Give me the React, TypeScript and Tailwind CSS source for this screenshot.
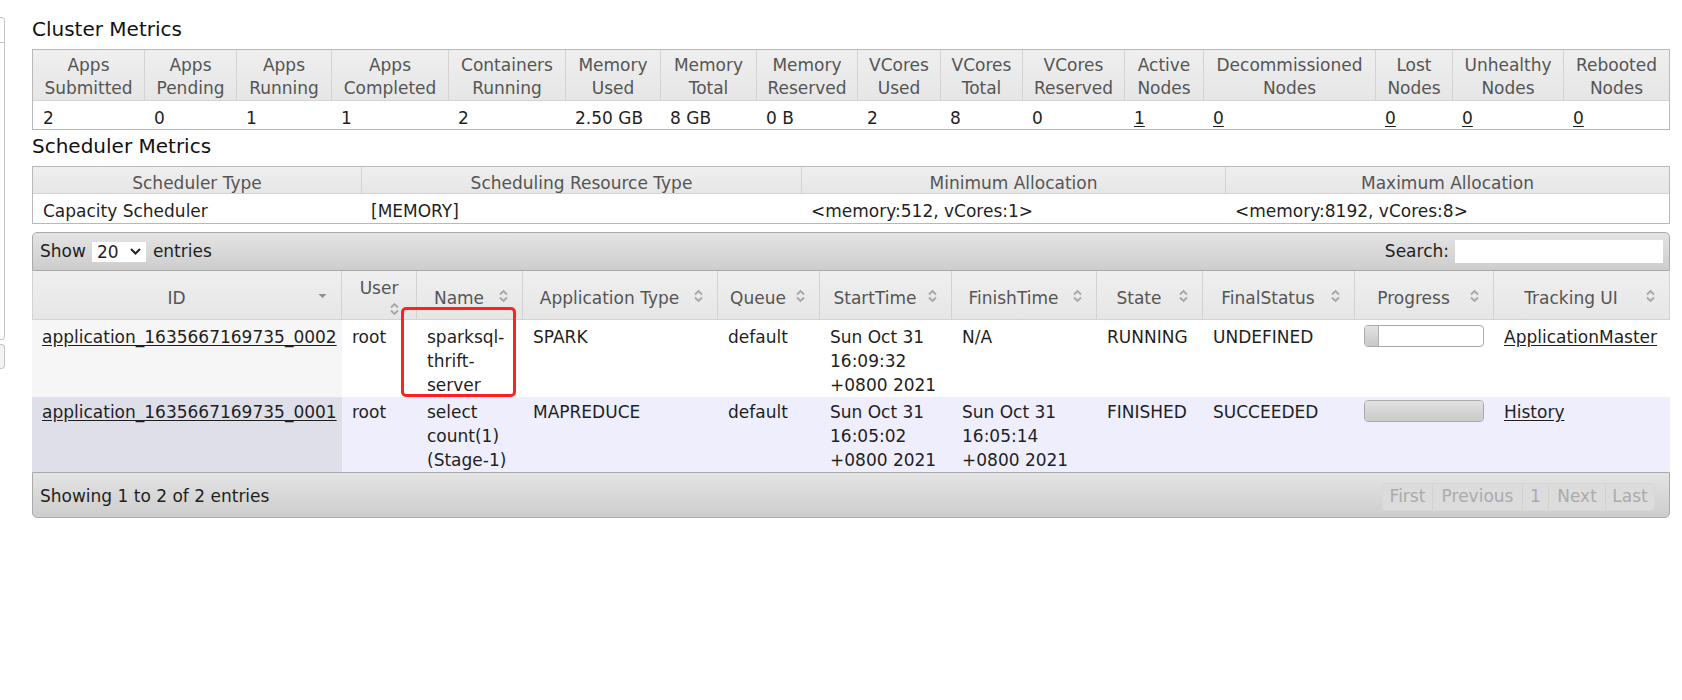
import React from "react";

type Cell = { v: string; link?: boolean };

const clusterHeads: [string, string][] = [
  ["Apps", "Submitted"],
  ["Apps", "Pending"],
  ["Apps", "Running"],
  ["Apps", "Completed"],
  ["Containers", "Running"],
  ["Memory", "Used"],
  ["Memory", "Total"],
  ["Memory", "Reserved"],
  ["VCores", "Used"],
  ["VCores", "Total"],
  ["VCores", "Reserved"],
  ["Active", "Nodes"],
  ["Decommissioned", "Nodes"],
  ["Lost", "Nodes"],
  ["Unhealthy", "Nodes"],
  ["Rebooted", "Nodes"],
];

const clusterData: Cell[] = [
  { v: "2" },
  { v: "0" },
  { v: "1" },
  { v: "1" },
  { v: "2" },
  { v: "2.50 GB" },
  { v: "8 GB" },
  { v: "0 B" },
  { v: "2" },
  { v: "8" },
  { v: "0" },
  { v: "1", link: true },
  { v: "0", link: true },
  { v: "0", link: true },
  { v: "0", link: true },
  { v: "0", link: true },
];

const schedHeads = ["Scheduler Type", "Scheduling Resource Type", "Minimum Allocation", "Maximum Allocation"];
const schedData = ["Capacity Scheduler", "[MEMORY]", "<memory:512, vCores:1>", "<memory:8192, vCores:8>"];

const appHeads = [
  "ID",
  "User",
  "Name",
  "Application Type",
  "Queue",
  "StartTime",
  "FinishTime",
  "State",
  "FinalStatus",
  "Progress",
  "Tracking UI",
];

type AppRow = {
  id: string;
  user: string;
  name: string[];
  type: string;
  queue: string;
  start: string[];
  finish: string[];
  state: string;
  final: string;
  progress: number;
  tracking: string;
};

const rows: AppRow[] = [
  {
    id: "application_1635667169735_0002",
    user: "root",
    name: ["sparksql-", "thrift-", "server"],
    type: "SPARK",
    queue: "default",
    start: ["Sun Oct 31", "16:09:32", "+0800 2021"],
    finish: ["N/A"],
    state: "RUNNING",
    final: "UNDEFINED",
    progress: 14,
    tracking: "ApplicationMaster",
  },
  {
    id: "application_1635667169735_0001",
    user: "root",
    name: ["select", "count(1)", "(Stage-1)"],
    type: "MAPREDUCE",
    queue: "default",
    start: ["Sun Oct 31", "16:05:02", "+0800 2021"],
    finish: ["Sun Oct 31", "16:05:14", "+0800 2021"],
    state: "FINISHED",
    final: "SUCCEEDED",
    progress: 120,
    tracking: "History",
  },
];

function SortBoth() {
  return (
    <svg width="9" height="14" viewBox="0 0 9 14">
      <path d="M1 5.5L4.5 2L8 5.5" fill="none" stroke="#a6a6a6" strokeWidth="1.8" />
      <path d="M1 8.5L4.5 12L8 8.5" fill="none" stroke="#a6a6a6" strokeWidth="1.8" />
    </svg>
  );
}

function SortDesc() {
  return (
    <svg width="9" height="14" viewBox="0 0 9 14">
      <path d="M0.5 5H8.5L4.5 9Z" fill="#8e8e8e" />
    </svg>
  );
}

function Lines({ items }: { items: string[] }) {
  return (
    <>
      {items.map((t, i) => (
        <span key={i} className="block whitespace-nowrap">
          {t}
        </span>
      ))}
    </>
  );
}

export default function App() {
  return (
    <div className="flex min-h-[700px] w-[1682px] bg-white font-['DejaVu_Sans',sans-serif] text-[17px] text-[#1f1f1f]">
      {/* clipped left sidebar */}
      <aside className="flex w-[5px] shrink-0 flex-col gap-[4px] pt-[17px]">
        <div className="flex h-[323px] flex-col rounded-r-[4px] border border-l-0 border-[#c4c4c4]">
          <div className="h-[25px] border-b border-[#c4c4c4]" />
        </div>
        <div className="h-[25px] rounded-r-[4px] border border-l-0 border-[#c4c4c4] bg-[#f3f3f3]" />
      </aside>

      <main className="ml-[27px] flex w-[1638px] flex-col">
        {/* Cluster Metrics */}
        <h3 className="mt-[17px] h-[24px] text-[20px] leading-[24px] text-[#111]">Cluster Metrics</h3>
        <div className="mt-[8px] grid w-[1638px] grid-cols-[111px_92px_95px_117px_117px_95px_96px_101px_83px_82px_102px_79px_172px_77px_111px_106px] border border-[#b8b8b8]">
          {clusterHeads.map((h, i) => (
            <div
              key={i}
              className={`flex h-[51px] flex-col items-center justify-start border-b border-[#d3d3d3] bg-linear-to-b from-[#efefef] to-[#e6e6e6] pt-[4px] text-center leading-[23px] text-[#555] ${
                i > 0 ? "border-l" : ""
              }`}
            >
              <span className="whitespace-nowrap">{h[0]}</span>
              <span className="whitespace-nowrap">{h[1]}</span>
            </div>
          ))}
          {clusterData.map((c, i) => (
            <div key={i} className="flex h-[28px] items-center bg-white pl-[10px] pt-[7px] leading-[23px] whitespace-nowrap">
              {c.link ? <span className="underline underline-offset-2">{c.v}</span> : c.v}
            </div>
          ))}
        </div>

        {/* Scheduler Metrics */}
        <h3 className="mt-[4px] h-[24px] text-[20px] leading-[24px] text-[#111]">Scheduler Metrics</h3>
        <div className="mt-[8px] grid w-[1638px] grid-cols-[328px_440px_424px_444px] border border-[#b8b8b8]">
          {schedHeads.map((h, i) => (
            <div
              key={i}
              className={`flex h-[27px] items-center justify-center border-b border-[#d3d3d3] bg-linear-to-b from-[#efefef] to-[#e6e6e6] pt-[6px] leading-[23px] text-[#555] ${
                i > 0 ? "border-l" : ""
              }`}
            >
              {h}
            </div>
          ))}
          {schedData.map((d, i) => (
            <div key={i} className="flex h-[29px] items-center bg-white pl-[10px] pt-[6px] leading-[23px] whitespace-nowrap">
              {d}
            </div>
          ))}
        </div>

        {/* Applications table */}
        <div className="relative mt-[8px] w-[1638px]">
          {/* toolbar */}
          <div className="flex h-[39px] items-center justify-between rounded-t-[5px] border border-[#aaaaaa] bg-linear-to-b from-[#e4e4e4] to-[#cdcdcd] pl-[7px] pr-[6px]">
            <div className="flex items-center">
              <span>Show</span>
              <div className="ml-[6px] flex h-[20px] w-[54px] items-center justify-between bg-white pl-[5px] pr-[5px]">
                <span className="leading-[20px]">20</span>
                <svg width="11" height="7" viewBox="0 0 11 7">
                  <path d="M1 1L5.5 5.5L10 1" fill="none" stroke="#222" strokeWidth="2" />
                </svg>
              </div>
              <span className="ml-[7px]">entries</span>
            </div>
            <div className="flex items-center">
              <span>Search:</span>
              <div className="ml-[6px] h-[23px] w-[208px] bg-white" />
            </div>
          </div>

          {/* header row */}
          <div className="grid grid-cols-[310px_75px_106px_195px_102px_132px_145px_106px_152px_139px_176px]">
            {appHeads.map((h, i) => (
              <div
                key={i}
                className={`relative h-[49px] border-b border-r border-[#d3d3d3] bg-linear-to-b from-[#efefef] to-[#e6e6e6] text-[#555] ${
                  i === 0 ? "border-l" : ""
                }`}
              >
                {h === "User" ? (
                  <>
                    <div className="pt-[6px] text-center leading-[23px]">User</div>
                    <div className="absolute right-[17px] top-[31px] flex">
                      <SortBoth />
                    </div>
                  </>
                ) : (
                  <>
                    <div className="flex h-full items-center justify-center pr-[21px] pt-[6px] leading-[23px] whitespace-nowrap">
                      {h}
                    </div>
                    <div className="absolute right-[14px] top-[18px] flex">
                      {i === 0 ? <SortDesc /> : <SortBoth />}
                    </div>
                  </>
                )}
              </div>
            ))}
          </div>

          {/* body rows */}
          {rows.map((r, ri) => {
            const even = ri === 1;
            const pt = ri === 0 ? "pt-[5px]" : "pt-[3px]";
            const cell = `pl-[10px] pr-[2px] ${pt} leading-[24px]`;
            return (
              <div
                key={ri}
                className={`grid grid-cols-[310px_75px_106px_195px_102px_132px_145px_106px_152px_139px_176px] ${
                  even ? "bg-[#eeeefd]" : "bg-white"
                }`}
              >
                <div className={`${cell} ${even ? "bg-[#dfdfea]" : "bg-[#f6f6f6]"} whitespace-nowrap`}>
                  <span className="underline underline-offset-2">{r.id}</span>
                </div>
                <div className={cell}>{r.user}</div>
                <div className={cell}>
                  <Lines items={r.name} />
                </div>
                <div className={cell}>{r.type}</div>
                <div className={cell}>{r.queue}</div>
                <div className={cell}>
                  <Lines items={r.start} />
                </div>
                <div className={cell}>
                  <Lines items={r.finish} />
                </div>
                <div className={cell}>{r.state}</div>
                <div className={cell}>{r.final}</div>
                <div className={`pl-[9px] ${pt}`}>
                  <div className="flex h-[22px] w-[120px] overflow-hidden rounded-[4px] border border-[#aaaaaa] bg-white">
                    <div
                      className="h-full shrink-0 border-r border-[#b0b0b0] bg-linear-to-b from-[#e2e2e2] to-[#c9c9c9]"
                      style={{ width: `${r.progress}px` }}
                    />
                  </div>
                </div>
                <div className={`${cell} whitespace-nowrap`}>
                  <span className="underline underline-offset-2">{r.tracking}</span>
                </div>
              </div>
            );
          })}

          {/* footer */}
          <div className="flex h-[46px] items-center justify-between rounded-b-[5px] border border-[#aaaaaa] bg-linear-to-b from-[#e4e4e4] to-[#cdcdcd] pl-[7px] pr-[14px] pt-[3px]">
            <span>Showing 1 to 2 of 2 entries</span>
            <div className="flex h-[28px] items-stretch rounded-[3px] border border-[#d6d6d6] bg-[#dcdcdc] text-[#ababab]">
              <span className="flex w-[50px] items-center justify-center border-r border-[#d2d2d2]">First</span>
              <span className="flex w-[90px] items-center justify-center border-r border-[#d2d2d2]">Previous</span>
              <span className="flex w-[26px] items-center justify-center border-r border-[#d2d2d2]">1</span>
              <span className="flex w-[57px] items-center justify-center border-r border-[#d2d2d2]">Next</span>
              <span className="flex w-[48px] items-center justify-center">Last</span>
            </div>
          </div>

          {/* red annotation box */}
          <div className="pointer-events-none absolute left-[369px] top-[75px] h-[90px] w-[115px] rounded-[5px] border-[3px] border-[#ff2020]" />
        </div>
      </main>
    </div>
  );
}
